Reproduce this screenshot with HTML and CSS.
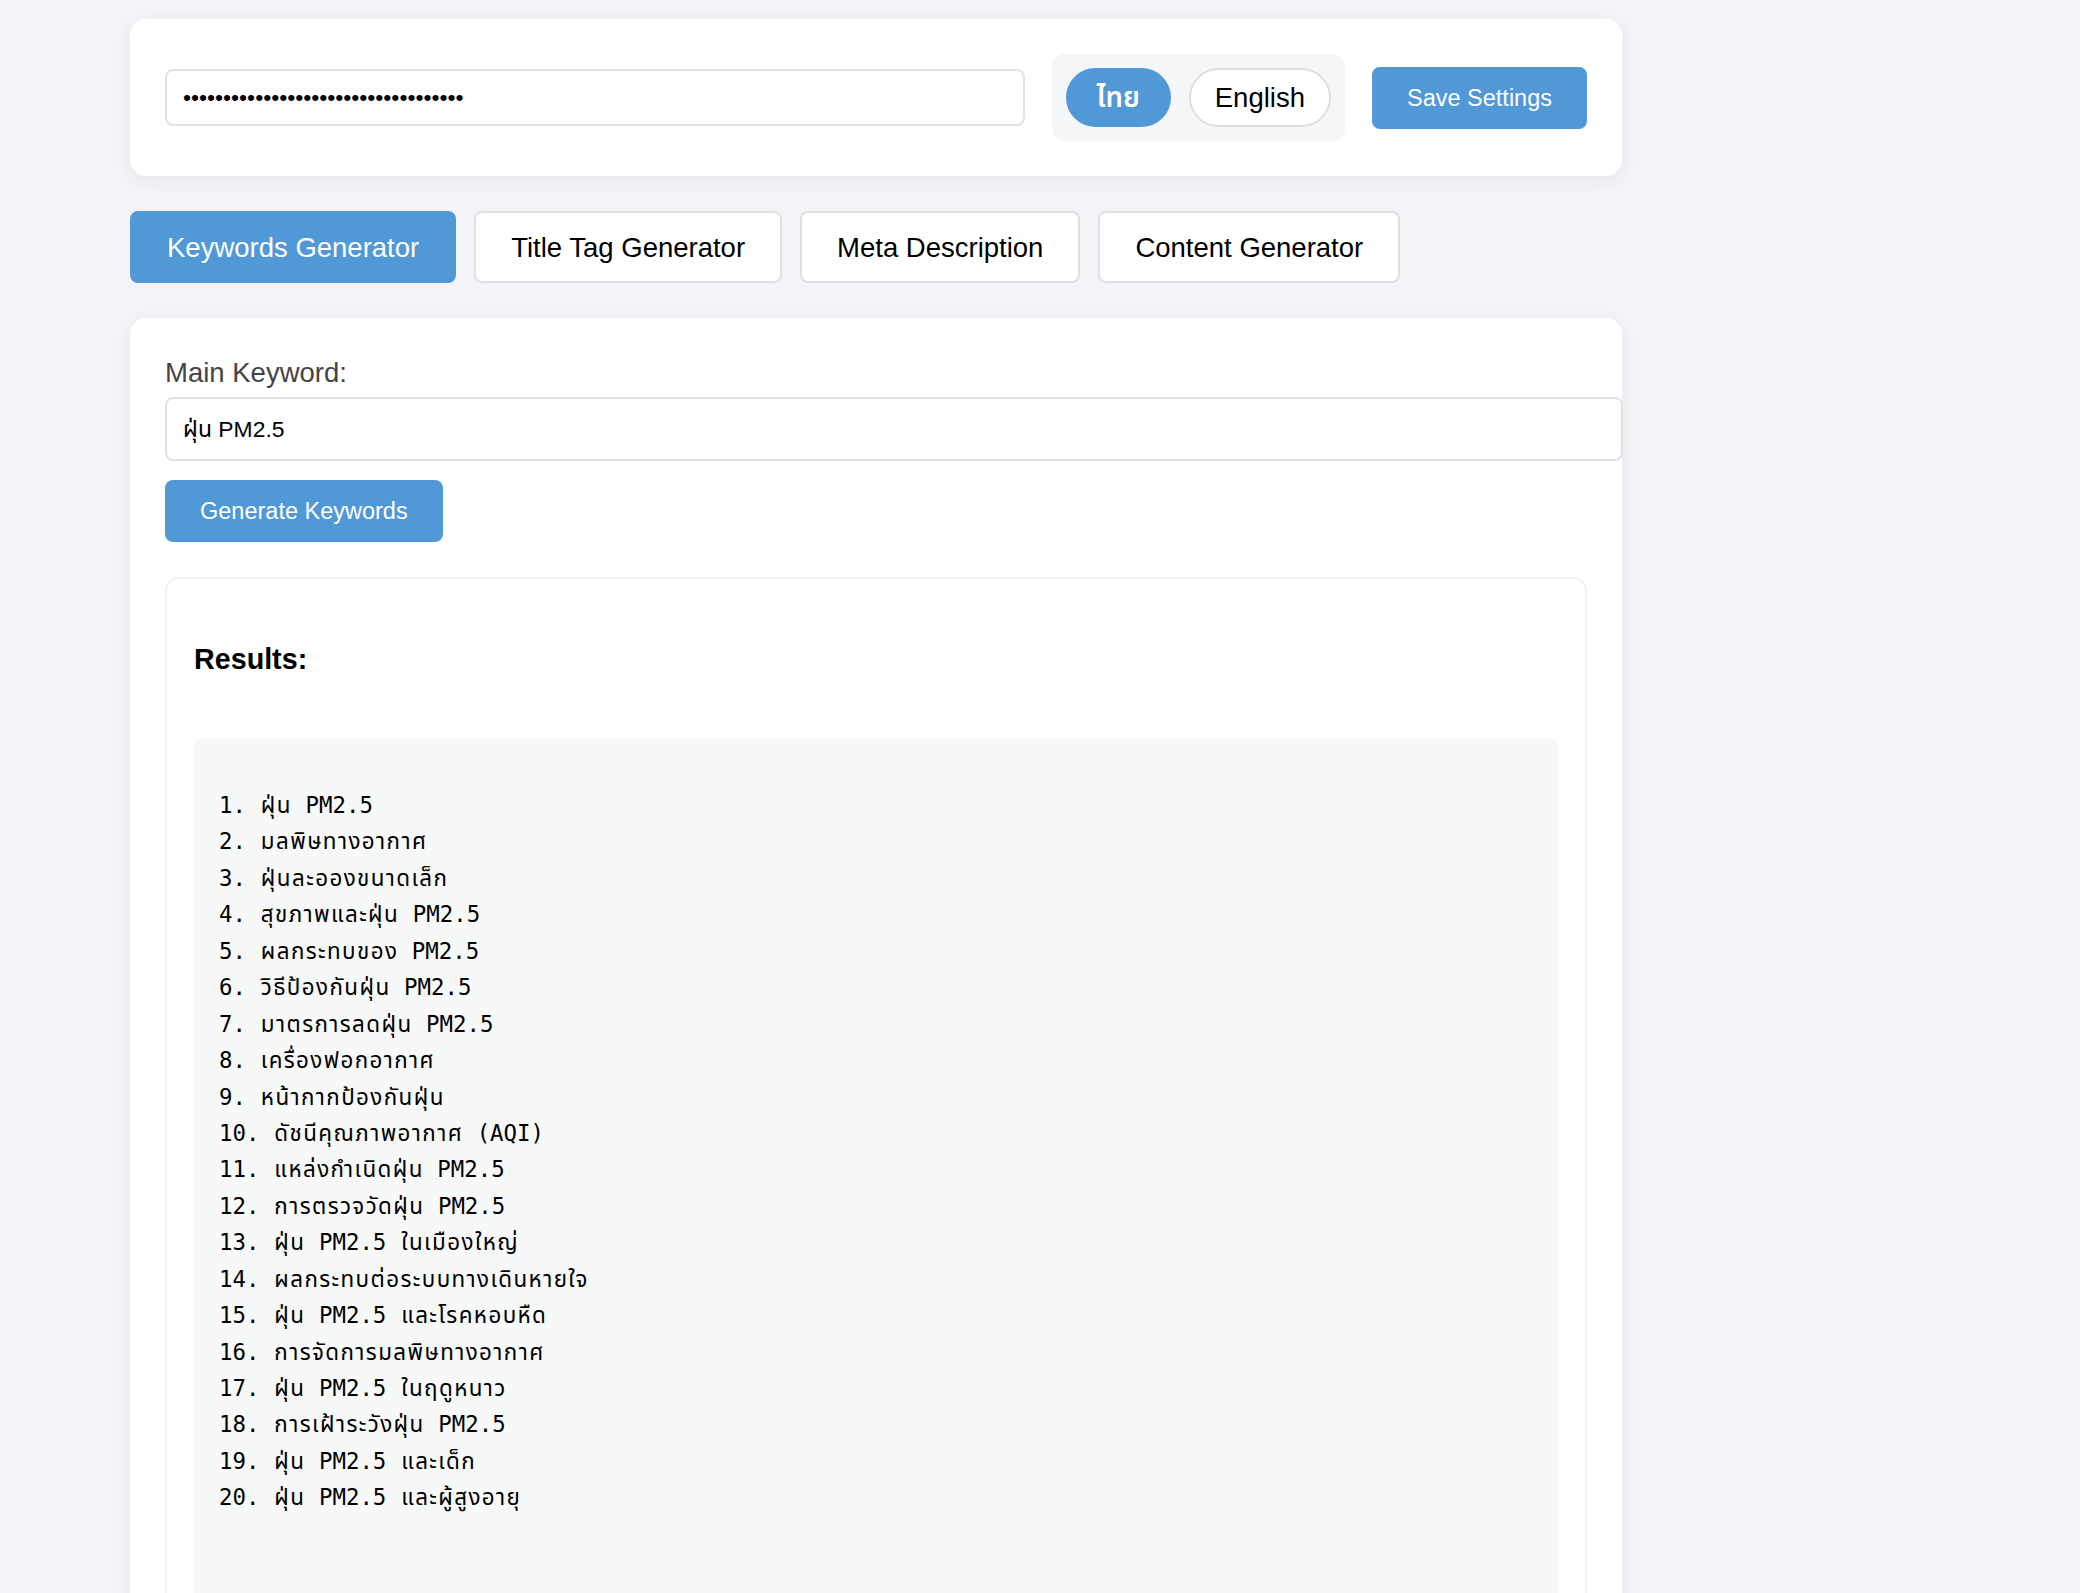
FILE: index.html
```html
<!DOCTYPE html>
<html lang="th">
<head>
<meta charset="utf-8">
<title>SEO Generator</title>
<link rel="stylesheet" href="styles.css">
</head>
<body>
<div class="app">
  <section class="card settings">
    <input type="password" class="api-key" value="sk-proj-abcdefghijklmnopqrstuvwxyz1">
    <div class="lang-switch">
      <button class="lang lang-th active">ไทย</button>
      <button class="lang">English</button>
    </div>
    <button class="btn-primary">Save Settings</button>
  </section>

  <nav class="tabs">
    <button class="tab active">Keywords Generator</button>
    <button class="tab">Title Tag Generator</button>
    <button class="tab">Meta Description</button>
    <button class="tab">Content Generator</button>
  </nav>

  <section class="card panel">
    <label class="field-label" for="kw">Main Keyword:</label>
    <input id="kw" type="text" class="keyword-input" value="ฝุ่น PM2.5">
    <button class="btn-primary generate">Generate Keywords</button>
    <div class="results">
      <h3 class="results-title">Results:</h3>
      <div class="output">
        <div class="line">1.<span class="th"> ฝุ่น</span> PM2.5</div>
        <div class="line">2.<span class="th"> มลพิษทางอากาศ</span></div>
        <div class="line">3.<span class="th"> ฝุ่นละอองขนาดเล็ก</span></div>
        <div class="line">4.<span class="th"> สุขภาพและฝุ่น</span> PM2.5</div>
        <div class="line">5.<span class="th"> ผลกระทบของ</span> PM2.5</div>
        <div class="line">6.<span class="th"> วิธีป้องกันฝุ่น</span> PM2.5</div>
        <div class="line">7.<span class="th"> มาตรการลดฝุ่น</span> PM2.5</div>
        <div class="line">8.<span class="th"> เครื่องฟอกอากาศ</span></div>
        <div class="line">9.<span class="th"> หน้ากากป้องกันฝุ่น</span></div>
        <div class="line">10.<span class="th"> ดัชนีคุณภาพอากาศ</span> (AQI)</div>
        <div class="line">11.<span class="th"> แหล่งกำเนิดฝุ่น</span> PM2.5</div>
        <div class="line">12.<span class="th"> การตรวจวัดฝุ่น</span> PM2.5</div>
        <div class="line">13.<span class="th"> ฝุ่น</span> PM2.5<span class="th"> ในเมืองใหญ่</span></div>
        <div class="line">14.<span class="th"> ผลกระทบต่อระบบทางเดินหายใจ</span></div>
        <div class="line">15.<span class="th"> ฝุ่น</span> PM2.5<span class="th"> และโรคหอบหืด</span></div>
        <div class="line">16.<span class="th"> การจัดการมลพิษทางอากาศ</span></div>
        <div class="line">17.<span class="th"> ฝุ่น</span> PM2.5<span class="th"> ในฤดูหนาว</span></div>
        <div class="line">18.<span class="th"> การเฝ้าระวังฝุ่น</span> PM2.5</div>
        <div class="line">19.<span class="th"> ฝุ่น</span> PM2.5<span class="th"> และเด็ก</span></div>
        <div class="line">20.<span class="th"> ฝุ่น</span> PM2.5<span class="th"> และผู้สูงอายุ</span></div>
      </div>
    </div>
  </section>
</div>
</body>
</html>
```

FILE: styles.css
```css
* {
  box-sizing: border-box;
}

html, body {
  margin: 0;
  padding: 0;
}

body {
  background: #f4f4f8;
  font-family: "Liberation Sans", "Noto Sans Thai", "Tlwg Typist", "Loma", "Garuda", "Noto Sans", sans-serif;
  font-size: 27.5px;
  color: #000;
}

.app {
  width: 1492px;
  margin-left: 130px;
  padding-top: 19px;
}

.card {
  background: #fff;
  border-radius: 16px;
  box-shadow: 0 4px 18px rgba(30, 30, 60, 0.07);
  padding: 35px;
}

/* ---------- settings bar ---------- */
.settings {
  display: flex;
  align-items: center;
  gap: 27px;
}

.api-key {
  flex: 1;
  height: 57px;
  padding: 0 16px;
  border: 2px solid #e2e2e2;
  border-radius: 8px;
  font-family: "Liberation Sans", sans-serif;
  font-size: 22.9px;
  color: #000;
  background: #fff;
}

.lang-switch {
  display: flex;
  gap: 18px;
  padding: 14px;
  background: #f5f6f7;
  border-radius: 12px;
}

.lang {
  font-family: inherit;
  font-size: 27.5px;
  line-height: 33px;
  padding: 11px 24px;
  border: 2px solid #dedede;
  border-radius: 40px;
  background: #fff;
  color: #000;
}

.lang.active {
  background: #5098d6;
  border-color: #5098d6;
  color: #fff;
}

.lang-th {
  padding-left: 29px;
  padding-right: 29px;
  font-weight: 600;
}

.btn-primary {
  font-family: "Liberation Sans", "Noto Sans Thai", sans-serif;
  font-size: 23.5px;
  line-height: 28px;
  padding: 17px 35px;
  border: none;
  border-radius: 8px;
  background: #5098d6;
  color: #fff;
}

/* ---------- tabs ---------- */
.tabs {
  display: flex;
  gap: 18px;
  margin-top: 35px;
}

.tab {
  font-family: inherit;
  font-size: 27.5px;
  line-height: 33px;
  padding: 17.5px 35px;
  border: 2px solid #e0e0e0;
  border-radius: 8px;
  background: #fff;
  color: #000;
}

.tab.active {
  background: #5098d6;
  border-color: #5098d6;
  color: #fff;
}

/* ---------- panel ---------- */
.panel {
  margin-top: 35px;
  padding-bottom: 0;
  border-bottom-left-radius: 0;
  border-bottom-right-radius: 0;
}

.field-label {
  display: block;
  font-size: 27.5px;
  line-height: 33px;
  color: #444;
  margin-top: 3px;
  margin-bottom: 8px;
}

.keyword-input {
  display: block;
  box-sizing: content-box;
  width: 100%;
  padding: 16px;
  line-height: 28px;
  border: 2px solid #e2e2e2;
  border-radius: 8px;
  font-family: "Liberation Sans", "Noto Sans Thai", "Tlwg Typist", sans-serif;
  font-size: 22.9px;
  color: #000;
  background: #fff;
}

.generate {
  display: block;
  margin-top: 19px;
}

.results {
  margin-top: 35px;
  border: 2px solid #f1f1f2;
  border-bottom: none;
  border-radius: 14px 14px 0 0;
  padding: 26px 26px 0;
}

.results-title {
  margin: 37px 0 63px 1px;
  font-size: 28.7px;
  line-height: 34px;
  font-weight: bold;
  color: #000;
}

.output {
  margin: 0;
  padding: 48px 26px 140px;
  background: #f7f8f8;
  border-radius: 8px 8px 0 0;
  font-family: "DejaVu Sans Mono", "Tlwg Mono", "Tlwg Typo", "Noto Sans Mono", "Noto Sans Thai", monospace;
  font-size: 22.4px;
  line-height: 36.45px;
  color: #000;
}

.line {
  white-space: pre;
  height: 36.45px;
}

.line .th {
  letter-spacing: 1.4px;
}
```
